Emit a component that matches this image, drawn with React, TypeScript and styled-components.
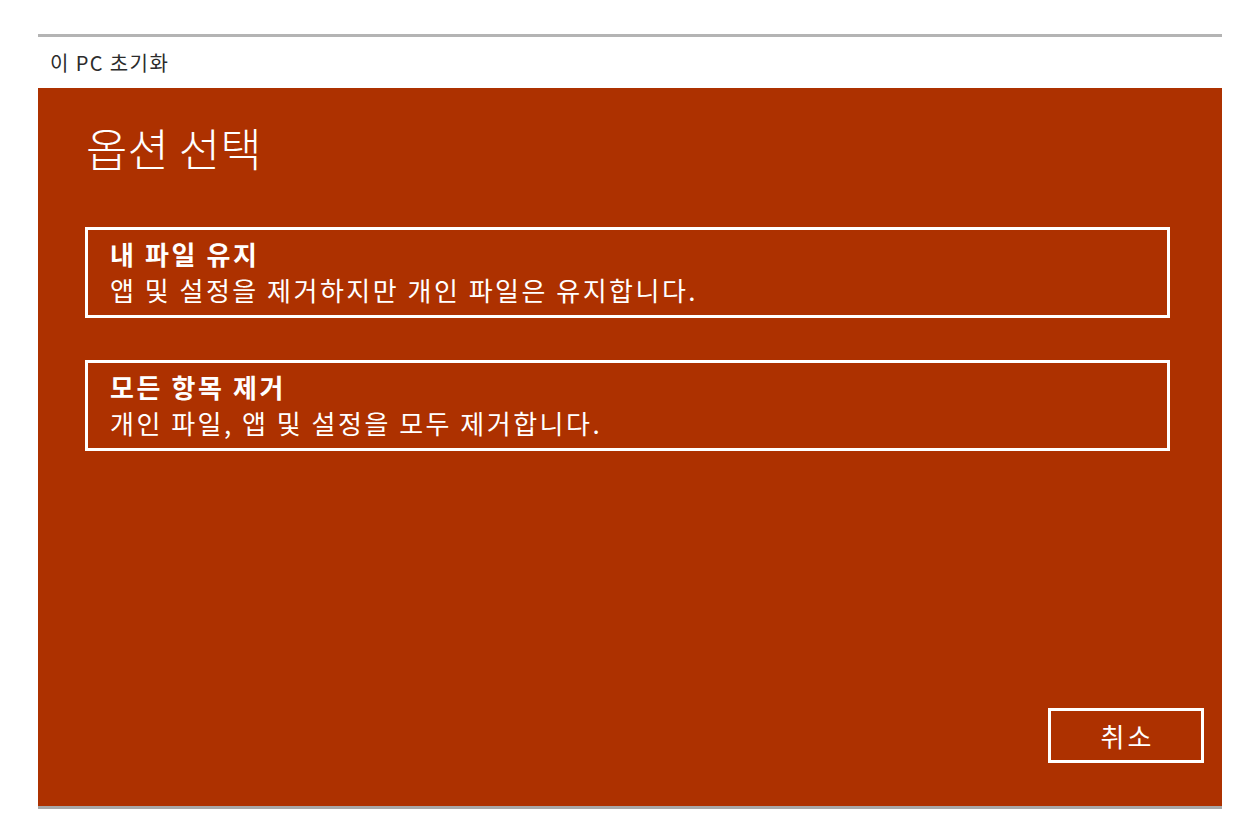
import React from 'react'
import styled, { createGlobalStyle } from 'styled-components'

const GlobalStyle = createGlobalStyle`
  html, body {
    margin: 0;
    padding: 0;
    background: #ffffff;
  }
  body {
    font-family: 'Noto Sans CJK KR', 'Noto Sans', sans-serif;
  }
`

const Page = styled.div`
  width: 1252px;
  height: 834px;
  padding-top: 34px;
  box-sizing: border-box;
`

const Window = styled.div`
  margin-left: 38px;
  width: 1184px;
  display: flex;
  flex-flow: column nowrap;
  border-top: 3px solid #b4b4b4;
  border-bottom: 3px solid #a8a8a8;
`

const TitleBar = styled.div`
  height: 51px;
  display: flex;
  align-items: center;
  padding-left: 12px;
  background: #ffffff;
  font-size: 20px;
  letter-spacing: 1.4px;
  color: #2b2b2b;
`

const Panel = styled.div`
  height: 718px;
  background: #ad3100;
  box-sizing: border-box;
  display: flex;
  flex-flow: column nowrap;
  padding: 28px 52px 0 47px;
  color: #ffffff;
`

const Heading = styled.div`
  font-size: 45px;
  font-weight: 300;
  line-height: 64px;
  margin-left: 1px;
`

const OptionList = styled.div`
  display: flex;
  flex-flow: column nowrap;
  gap: 42px;
  margin-top: 47px;
`

const OptionCard = styled.div`
  height: 91px;
  border: 3px solid #ffffff;
  box-sizing: border-box;
  padding: 8px 22px 0;
  display: flex;
  flex-flow: column nowrap;
  justify-content: center;
`

const OptionTitle = styled.div`
  font-size: 26px;
  font-weight: 700;
  line-height: 36px;
  letter-spacing: 2.6px;
`

const OptionDesc = styled.div`
  font-size: 26px;
  line-height: 36px;
  letter-spacing: 2.5px;
  margin-top: 0;
  padding-bottom: 10px;
`

const Footer = styled.div`
  margin-top: auto;
  display: flex;
  justify-content: flex-end;
  padding-bottom: 43px;
  margin-right: -34px;
`

const CancelButton = styled.button`
  width: 156px;
  height: 55px;
  background: transparent;
  border: 3px solid #ffffff;
  color: #ffffff;
  font-family: 'Noto Sans CJK KR', 'Noto Sans', sans-serif;
  font-size: 26px;
  letter-spacing: 3px;
  padding: 0 0 0 3px;
  cursor: pointer;
`

const options = [
  { title: '내 파일 유지', desc: '앱 및 설정을 제거하지만 개인 파일은 유지합니다.' },
  { title: '모든 항목 제거', desc: '개인 파일, 앱 및 설정을 모두 제거합니다.' },
]

const App = () => {
  return (
    <Page>
      <GlobalStyle />
      <Window>
        <TitleBar>이 PC 초기화</TitleBar>
        <Panel>
          <Heading>옵션 선택</Heading>
          <OptionList>
            {options.map((opt, index) => (
              <OptionCard key={index}>
                <OptionTitle>{opt.title}</OptionTitle>
                <OptionDesc>{opt.desc}</OptionDesc>
              </OptionCard>
            ))}
          </OptionList>
          <Footer>
            <CancelButton>취소</CancelButton>
          </Footer>
        </Panel>
      </Window>
    </Page>
  )
}

export default App
